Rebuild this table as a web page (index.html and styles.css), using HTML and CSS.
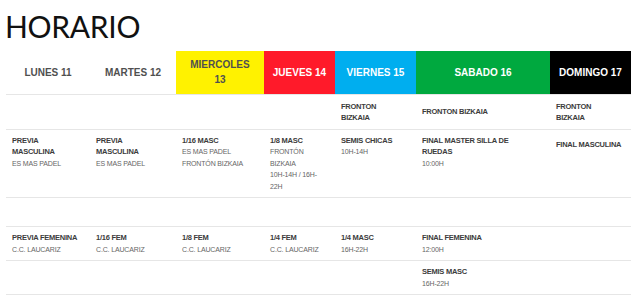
FILE: index.html
```html
<!DOCTYPE html>
<html lang="es">
<head>
<meta charset="utf-8">
<title>Horario</title>
<link rel="stylesheet" href="styles.css">
</head>
<body>
<div class="page">
  <h1 class="title">HORARIO</h1>
  <table class="schedule">
    <colgroup>
      <col class="c-lun"><col class="c-mar"><col class="c-mie"><col class="c-jue"><col class="c-vie"><col class="c-sab"><col class="c-dom">
    </colgroup>
    <thead>
      <tr>
        <th class="day">LUNES 11</th>
        <th class="day">MARTES 12</th>
        <th class="day d-yellow">MIERCOLES<br>13</th>
        <th class="day d-red">JUEVES 14</th>
        <th class="day d-blue">VIERNES 15</th>
        <th class="day d-green">SABADO 16</th>
        <th class="day d-black">DOMINGO 17</th>
      </tr>
    </thead>
    <tbody>
      <tr class="row-venue">
        <td></td><td></td><td></td><td></td>
        <td><span class="t">FRONTON<br>BIZKAIA</span></td>
        <td><span class="t">FRONTON BIZKAIA</span></td>
        <td><span class="t">FRONTON<br>BIZKAIA</span></td>
      </tr>
      <tr>
        <td><span class="t">PREVIA<br>MASCULINA</span><span class="s">ES MAS PADEL</span></td>
        <td><span class="t">PREVIA<br>MASCULINA</span><span class="s">ES MAS PADEL</span></td>
        <td><span class="t">1/16 MASC</span><span class="s">ES MAS PADEL</span><span class="s">FRONTÓN BIZKAIA</span></td>
        <td><span class="t">1/8 MASC</span><span class="s">FRONTÓN<br>BIZKAIA</span><span class="s">10H-14H / 16H-<br>22H</span></td>
        <td><span class="t">SEMIS CHICAS</span><span class="s">10H-14H</span></td>
        <td><span class="t">FINAL MASTER SILLA DE<br>RUEDAS</span><span class="s">10:00H</span></td>
        <td class="lowered"><span class="t">FINAL MASCULINA</span></td>
      </tr>
      <tr class="row-spacer">
        <td></td><td></td><td></td><td></td><td></td><td></td><td></td>
      </tr>
      <tr>
        <td><span class="t">PREVIA FEMENINA</span><span class="s">C.C. LAUCARIZ</span></td>
        <td><span class="t">1/16 FEM</span><span class="s">C.C. LAUCARIZ</span></td>
        <td><span class="t">1/8 FEM</span><span class="s">C.C. LAUCARIZ</span></td>
        <td><span class="t">1/4 FEM</span><span class="s">C.C. LAUCARIZ</span></td>
        <td><span class="t">1/4 MASC</span><span class="s">16H-22H</span></td>
        <td><span class="t">FINAL FEMENINA</span><span class="s">12:00H</span></td>
        <td></td>
      </tr>
      <tr>
        <td></td><td></td><td></td><td></td><td></td>
        <td><span class="t">SEMIS MASC</span><span class="s">16H-22H</span></td>
        <td></td>
      </tr>
    </tbody>
  </table>
</div>
</body>
</html>
```

FILE: styles.css
```css
* { box-sizing: border-box; }
html, body { margin: 0; padding: 0; background: #fff; }
body { font-family: "Liberation Sans", Arial, sans-serif; color: #444; }

.page { padding: 0 0 0 6px; }

.title {
  margin: 8px 0 7px -1px;
  font-family: Lato, "Open Sans", sans-serif;
  font-weight: 400;
  font-size: 30px;
  line-height: 36px;
  color: #111;
  letter-spacing: -0.3px;
}

.schedule {
  width: 625px;
  border-collapse: collapse;
  table-layout: fixed;
}
.c-lun { width: 84px; }
.c-mar { width: 86px; }
.c-mie { width: 88px; }
.c-jue { width: 71px; }
.c-vie { width: 81px; }
.c-sab { width: 134px; }
.c-dom { width: 81px; }

.day {
  height: 43px;
  padding: 0 6px;
  font-size: 10px;
  font-weight: 700;
  line-height: 15.5px;
  text-align: center;
  vertical-align: middle;
  color: #505050;
  border-bottom: 1px solid #e6e6e6;
}
.d-yellow { background: #fff200; color: #505050; }
.d-red { background: #ff1a2a; color: #fff; }
.d-blue { background: #00aeef; color: #fff; }
.d-green { background: #00a93f; color: #fff; }
.d-black { background: #000; color: #fff; }

.schedule td {
  padding: 5px 6px 5px 6px;
  vertical-align: top;
  border-top: 1px solid #e6e6e6;
  line-height: 11.5px;
  white-space: nowrap;
}
.schedule tbody tr:last-child td { border-bottom: 1px solid #e6e6e6; }

.row-venue td { vertical-align: middle; padding-top: 6px; }
.row-spacer td { height: 29px; }
.lowered { padding-top: 9px !important; }

.t {
  display: block;
  font-size: 7.5px;
  font-weight: 700;
  letter-spacing: -0.25px;
  color: #3c3c3c;
}
.s {
  display: block;
  font-size: 7px;
  letter-spacing: -0.15px;
  color: #666;
}
```
